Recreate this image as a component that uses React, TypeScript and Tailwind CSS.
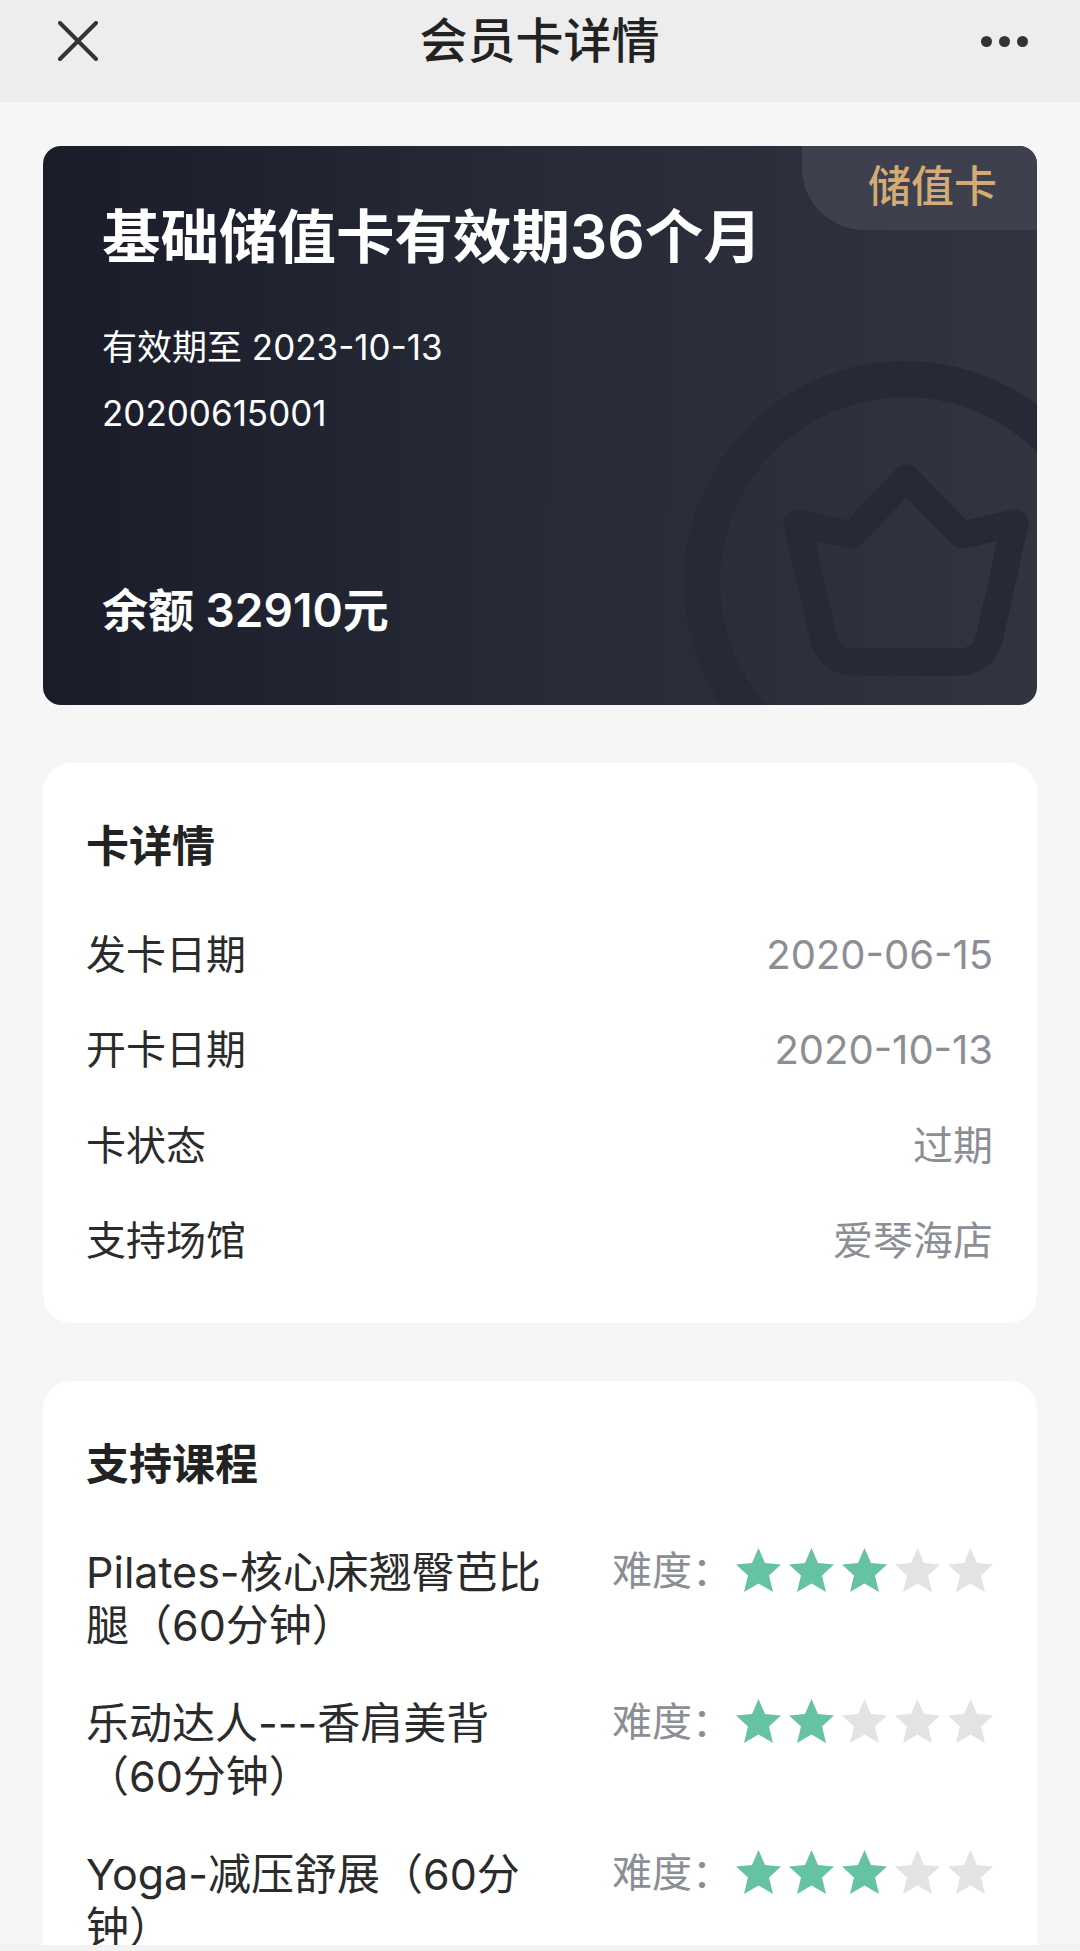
const font = "font-['Inter','Noto_Sans_CJK_SC',sans-serif]"

const details = [
  { label: "发卡日期", value: "2020-06-15" },
  { label: "开卡日期", value: "2020-10-13" },
  { label: "卡状态", value: "过期" },
  { label: "支持场馆", value: "爱琴海店" },
]

const courses = [
  { name: "Pilates-核心床翘臀芭比腿（60分钟）", level: 3 },
  { name: "乐动达人---香肩美背（60分钟）", level: 2 },
  { name: "Yoga-减压舒展（60分钟）", level: 3 },
]

function Star({ on }: { on: boolean }) {
  return (
    <svg viewBox="0 0 45 45" className={`h-[45px] w-[45px] ${on ? "fill-[#66c2a5]" : "fill-[#e3e3e3]"}`}>
      <polygon points="22.5,0 29,15 45,16.500 33,27.500 37,44 22.5,35.500 8,44 12,27.500 0,16.500 16,15" />
    </svg>
  )
}

function CardDeco() {
  return (
    <svg viewBox="0 0 994 559" fill="none" className="absolute inset-0 h-full w-full stroke-[#262936]">
      <circle cx="862" cy="436" r="203" strokeWidth="36" />
      <path
        d="M754 377 L809 389 L863 332 L919 389 L972 377 L947 490 Q941 516 915 516 L812 516 Q786 516 780 490 Z"
        strokeWidth="27"
        strokeLinejoin="round"
      />
    </svg>
  )
}

export default function App() {
  return (
    <div className={`flex h-[1951px] w-[1080px] flex-col overflow-hidden bg-[#f6f6f6] ${font}`}>
      <header className="flex h-[102px] shrink-0 items-center justify-between bg-[#ededed] pb-[20px] pl-[58px] pr-[52px]">
        <svg viewBox="0 0 40 40" className="h-[40px] w-[40px] stroke-[#333333]" strokeWidth="4" strokeLinecap="round">
          <path d="M2 2 L38 38 M38 2 L2 38" />
        </svg>
        <h1 className="text-[48px] leading-none font-medium text-[#222222]">会员卡详情</h1>
        <div className="flex gap-[7px]">
          <span className="h-[11px] w-[11px] rounded-full bg-[#333333]" />
          <span className="h-[11px] w-[11px] rounded-full bg-[#333333]" />
          <span className="h-[11px] w-[11px] rounded-full bg-[#333333]" />
        </div>
      </header>

      <main className="flex min-h-0 flex-1 flex-col gap-[58px] overflow-hidden px-[43px] pt-[44px]">
        <section className="relative flex h-[559px] shrink-0 flex-col overflow-hidden rounded-[18px] bg-gradient-to-r from-[#1a1c29] via-[#272a37] to-[#32343f] pl-[59px] text-white">
          <CardDeco />
          <span className="absolute top-0 right-0 flex h-[84px] w-[235px] items-center justify-end rounded-bl-[62px] bg-[#3f404d] pr-[40px] pb-[4px] text-[43px] leading-none font-medium text-[#d4ab74]">
            储值卡
          </span>
          <h2 className="relative mt-[55px] text-[58.500px] leading-[72px] font-semibold">基础储值卡有效期36个月</h2>
          <p className="relative mt-[41px] text-[35px] leading-[66px]">有效期至 2023-10-13</p>
          <p className="relative text-[35px] leading-[66px]">20200615001</p>
          <p className="relative mt-auto mb-[65px] text-[46px] leading-[60px] font-semibold">余额 32910元</p>
        </section>

        <section className="flex h-[560px] shrink-0 flex-col rounded-[28px] bg-white pt-[53px] pr-[44px] pl-[43px]">
          <h3 className="text-[43px] leading-[60px] font-semibold text-[#222222]">卡详情</h3>
          <div className="mt-[31px] flex flex-col">
            {details.map((row) => (
              <div key={row.label} className="flex h-[95.500px] items-center justify-between text-[40px]">
                <span className="text-[#2b2b2b]">{row.label}</span>
                <span className="text-[#8b8e94]">{row.value}</span>
              </div>
            ))}
          </div>
        </section>

        <section className="flex-1 rounded-t-[28px] bg-white pt-[53px] pr-[44px] pl-[43px]">
          <h3 className="text-[43px] leading-[60px] font-semibold text-[#222222]">支持课程</h3>
          <div className="mt-[50px] flex flex-col gap-[45px]">
            {courses.map((c) => (
              <div key={c.name} className="flex items-start justify-between">
                <p className="mt-[2px] -mb-[2px] w-[462px] text-[43px] leading-[53px] text-[#2b2b2b] [text-spacing-trim:space-all]">
                  {c.name}
                </p>
                <div className="flex items-center">
                  <span className="mr-[4px] text-[40px] leading-[53px] text-[#8b8e94]">难度：</span>
                  <div className="flex gap-[8px]">
                    {[1, 2, 3, 4, 5].map((n) => (
                      <Star key={n} on={n <= c.level} />
                    ))}
                  </div>
                </div>
              </div>
            ))}
          </div>
        </section>
      </main>
      <div className="h-[6px] shrink-0 bg-[#f2f2f2]" />
    </div>
  )
}
